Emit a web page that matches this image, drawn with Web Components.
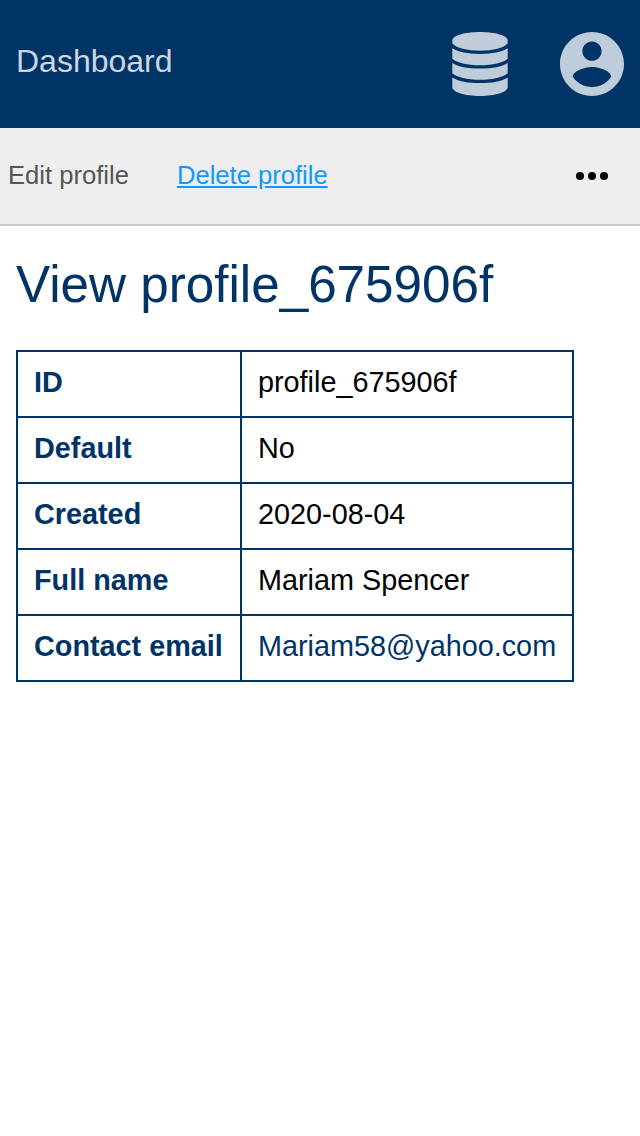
<!DOCTYPE html>
<html lang="en">
<head>
<meta charset="utf-8">
<title>View profile</title>
<style>
body { margin: 0; background: #fff; color: #000; font-family: "Liberation Sans", Arial, sans-serif; }
</style>
</head>
<body>
<profile-page></profile-page>
<script>
const define = (name, html) => {
  const template = document.createElement("template");
  template.innerHTML = html;
  customElements.define(name, class extends HTMLElement {
    constructor() {
      super();
      this.attachShadow({ mode: "open" }).append(template.content.cloneNode(true));
    }
  });
};

define("app-header", `
<style>
:host { display: flex; align-items: center; justify-content: space-between; height: 128px; padding: 0 16px; box-sizing: border-box; background: #036; color: #ccd6e0; font-size: 32px; line-height: 36px; }
.title { margin-bottom: 6px; }
nav { display: flex; align-items: center; gap: 48px; }
svg { display: block; height: 64px; width: 64px; fill: #bfccd9; }
</style>
<div class="title"><slot></slot></div>
<nav>
<svg viewBox="0 0 64 64"><path d="M4.300 8.500C4.300 3.500 17 0 32 0S59.700 3.500 59.700 8.500V11.500C56 16 45 18.700 32 18.700S8 16 4.300 11.500Z"/><path d="M4.300 16.300C10 20 20 21.900 32 21.900S54 20 59.700 16.300V26.700C55 30.700 45 33.200 32 33.200S9 30.700 4.300 26.700Z"/><path d="M4.300 30.900C10 34.600 20 36.500 32 36.500S54 34.600 59.700 30.900V41.300C55 45.300 45 47.800 32 47.800S9 45.300 4.300 41.300Z"/><path d="M4.300 45.400C10 49.200 20 51.100 32 51.100S54 49.200 59.700 45.400V55C59.700 60.200 47 64 32 64S4.300 60.200 4.300 55Z"/></svg>
<svg viewBox="2 2 20 20"><path d="M12 2C6.480 2 2 6.480 2 12s4.480 10 10 10 10-4.480 10-10S17.520 2 12 2zm0 3c1.660 0 3 1.340 3 3s-1.340 3-3 3-3-1.340-3-3 1.340-3 3-3zm0 14.200c-2.500 0-4.710-1.280-6-3.220.030-1.990 4-3.080 6-3.080 1.990 0 5.970 1.090 6 3.080-1.290 1.940-3.500 3.220-6 3.220z"/></svg>
</nav>`);

define("action-bar", `
<style>
:host { display: flex; align-items: center; height: 98px; box-sizing: border-box; border-bottom: 2px solid #ccc; background: #eee; padding: 0 32px 0 8px; font-size: 25.6px; line-height: 30px; }
.actions { display: flex; gap: 48px; flex: 1; margin-bottom: 2px; }
svg { display: block; width: 32px; height: 8px; }
</style>
<div class="actions"><slot></slot></div>
<svg viewBox="0 0 32 8"><circle cx="4" cy="4" r="4"/><circle cx="16" cy="4" r="4"/><circle cx="28" cy="4" r="4"/></svg>`);

define("action-link", `
<style>
:host { display: block; color: #555; white-space: nowrap; }
:host([active]) { color: #1398ff; text-decoration: underline; }
</style>
<slot></slot>`);

define("profile-details", `
<style>
:host { display: grid; grid-template-columns: 224px 332px; width: max-content; box-sizing: border-box; border: 1px solid #036; font-size: 28.8px; line-height: 32px; }
</style>
<slot></slot>`);

define("detail-row", `
<style>
:host { display: grid; grid-column: 1 / -1; grid-template-columns: subgrid; }
div { padding: 14px 16px 18px; border: 1px solid #036; white-space: nowrap; box-sizing: border-box; height: 66px; }
.label { font-weight: bold; color: #036; }
:host([link]) .value { color: #036; }
</style>
<div class="label"><slot name="label"></slot></div>
<div class="value"><slot></slot></div>`);

define("profile-page", `
<style>
:host { display: block; }
main { padding: 29px 16px 0; }
h1 { margin: 0 0 36px; font-size: 51.2px; line-height: 59px; font-weight: normal; color: #036; }
</style>
<app-header>Dashboard</app-header>
<action-bar><action-link>Edit profile</action-link><action-link active>Delete profile</action-link></action-bar>
<main>
<h1>View profile_675906f</h1>
<profile-details>
<detail-row><span slot="label">ID</span>profile_675906f</detail-row>
<detail-row><span slot="label">Default</span>No</detail-row>
<detail-row><span slot="label">Created</span>2020-08-04</detail-row>
<detail-row><span slot="label">Full name</span>Mariam Spencer</detail-row>
<detail-row link><span slot="label">Contact email</span>Mariam58@yahoo.com</detail-row>
</profile-details>
</main>`);
</script>
</body>
</html>
